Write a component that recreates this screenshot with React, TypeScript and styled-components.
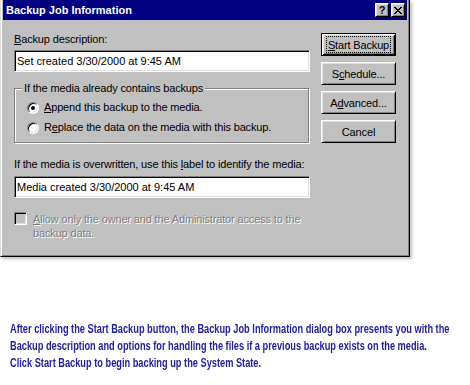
import React from "react";
import styled, { createGlobalStyle, css } from "styled-components";

const Global = createGlobalStyle`
  html, body { margin: 0; padding: 0; background: #fff; }
  body { font-family: "Liberation Sans", Arial, sans-serif; }
`;

const Page = styled.div`
  width: 470px;
  height: 385px;
  background: #fff;
  overflow: hidden;
`;

const Frame = styled.div`
  width: 410px;
  box-sizing: border-box;
  background: #c0c0c0;
  border: 1px solid;
  border-top: none;
  border-color: #dfdfdf #000 #000 #dfdfdf;
  padding: 0 2px 2px 2px;
  box-shadow: inset 1px 0 #fff, inset -1px -1px #808080, 2px 2px 3px rgba(0, 0, 0, 0.25);
`;

const TitleBar = styled.div`
  height: 20px;
  background: #000080;
  display: flex;
  align-items: center;
  padding: 0 2px 0 3px;
  color: #fff;
  font: bold 11px "Liberation Sans", Arial, sans-serif;
`;

const TitleText = styled.div`
  flex: 1;
`;

const TitleButtons = styled.div`
  display: flex;
  gap: 2px;
`;

const TitleBtn = styled.div`
  width: 14px;
  height: 14px;
  box-sizing: border-box;
  background: #c0c0c0;
  border: 1px solid;
  border-color: #fff #000 #000 #fff;
  box-shadow: inset 1px 1px #dfdfdf, inset -1px -1px #808080;
  display: flex;
  align-items: center;
  justify-content: center;
  color: #000;
  font: bold 11px "Liberation Sans", Arial, sans-serif;
  line-height: 1;
`;

const Body = styled.div`
  display: flex;
  gap: 11px;
  padding: 13px 11px 14px 11px;
  font: 11px "Liberation Sans", Arial, sans-serif;
  letter-spacing: -0.15px;
  color: #000;
`;

const LeftCol = styled.div`
  width: 296px;
  display: flex;
  flex-direction: column;
`;

const Label = styled.div<{ $mt?: number }>`
  line-height: 13px;
  white-space: nowrap;
  margin-top: ${(p) => p.$mt ?? 0}px;
`;

const Field = styled.input<{ $mt?: number }>`
  display: block;
  width: 296px;
  height: 22px;
  box-sizing: border-box;
  margin: ${(p) => p.$mt ?? 0}px 0 0 0;
  padding: 0 0 0 2px;
  background: #fff;
  border: 1px solid;
  border-color: #808080 #fff #fff #808080;
  box-shadow: inset 1px 1px #000, inset -1px -1px #dfdfdf;
  font: 11px "Liberation Sans", Arial, sans-serif;
  letter-spacing: 0;
  color: #000;
  outline: none;
`;

const Group = styled.div`
  position: relative;
  margin-top: 16px;
  margin-right: 1px;
  border: 1px solid #808080;
  box-shadow: inset 1px 1px #fff, 1px 1px #fff;
  padding: 12px 0 8px 12px;
  display: flex;
  flex-direction: column;
  gap: 7px;
`;

const Legend = styled.span`
  position: absolute;
  left: 7px;
  top: -7px;
  padding: 0 2px;
  background: #c0c0c0;
  line-height: 13px;
  white-space: nowrap;
`;

const OptionRow = styled.div`
  display: flex;
  align-items: center;
  gap: 5px;
  height: 13px;
  line-height: 13px;
  white-space: nowrap;
`;

const Radio = styled.span`
  width: 12px;
  height: 12px;
  box-sizing: border-box;
  border-radius: 50%;
  background: #fff;
  border: 1px solid;
  border-color: #808080 #fff #fff #808080;
  box-shadow: inset 1px 1px #000, inset -1px -1px #dfdfdf;
  display: flex;
  align-items: center;
  justify-content: center;
  flex-shrink: 0;
`;

const Dot = styled.span`
  width: 4px;
  height: 4px;
  border-radius: 50%;
  background: #000;
`;

const CheckRow = styled.div`
  display: flex;
  align-items: flex-start;
  gap: 6px;
  margin-top: 14px;
`;

const CheckBox = styled.span`
  width: 13px;
  height: 13px;
  box-sizing: border-box;
  background: #c0c0c0;
  border: 1px solid;
  border-color: #808080 #fff #fff #808080;
  box-shadow: inset 1px 1px #000, inset -1px -1px #dfdfdf;
  flex-shrink: 0;
`;

const DisabledText = styled.div`
  color: #808080;
  text-shadow: 1px 1px 0 #fff;
  line-height: 14px;
`;

const RightCol = styled.div`
  display: flex;
  flex-direction: column;
  gap: 6px;
`;

const Button = styled.div<{ $default?: boolean }>`
  width: 75px;
  height: 23px;
  box-sizing: border-box;
  background: #c0c0c0;
  border: 1px solid;
  border-color: #fff #000 #000 #fff;
  box-shadow: inset 1px 1px #dfdfdf, inset -1px -1px #808080;
  display: flex;
  align-items: center;
  justify-content: center;
  white-space: nowrap;
  ${(p) =>
    p.$default &&
    css`
      border-color: #000;
      box-shadow: inset 1px 1px #fff, inset -1px -1px #000, inset 2px 2px #dfdfdf,
        inset -2px -2px #808080;
      padding: 2px 4px;
    `}
`;

const FocusBox = styled.span`
  flex: 1;
  align-self: stretch;
  border: 1px dotted #000;
  display: flex;
  align-items: center;
  justify-content: center;
`;

const Caption = styled.div`
  margin-top: 64px;
  padding-left: 10px;
  color: #22229b;
  font-family: "Liberation Sans", Arial, sans-serif;
  font-weight: bold;
  font-size: 12px;
  line-height: 17px;
  white-space: nowrap;
  transform: scaleX(0.77);
  transform-origin: 10px 0;
`;

const CloseIcon = () => (
  <svg width="8" height="7" viewBox="0 0 8 7" shapeRendering="crispEdges">
    <path
      d="M0 0h2v1h-2zM6 0h2v1h-2zM1 1h2v1h-2zM5 1h2v1h-2zM2 2h4v1h-4zM3 3h2v1h-2zM2 4h4v1h-4zM1 5h2v1h-2zM5 5h2v1h-2zM0 6h2v1h-2zM6 6h2v1h-2z"
      fill="#000"
    />
  </svg>
);

export default function App() {
  return (
    <Page>
      <Global />
      <Frame>
        <TitleBar>
          <TitleText>Backup Job Information</TitleText>
          <TitleButtons>
            <TitleBtn>?</TitleBtn>
            <TitleBtn>
              <CloseIcon />
            </TitleBtn>
          </TitleButtons>
        </TitleBar>
        <Body>
          <LeftCol>
            <Label>
              <u>B</u>ackup description:
            </Label>
            <Field $mt={4} readOnly value="Set created 3/30/2000 at 9:45 AM" />
            <Group>
              <Legend>If the media already contains backups</Legend>
              <OptionRow>
                <Radio>
                  <Dot />
                </Radio>
                <span>
                  <u>A</u>ppend this backup to the media.
                </span>
              </OptionRow>
              <OptionRow>
                <Radio />
                <span>
                  R<u>e</u>place the data on the media with this backup.
                </span>
              </OptionRow>
            </Group>
            <Label $mt={15}>
              If the media is overwritten, use this <u>l</u>abel to identify the media:
            </Label>
            <Field $mt={5} readOnly value="Media created 3/30/2000 at 9:45 AM" />
            <CheckRow>
              <CheckBox />
              <DisabledText>
                <u>A</u>llow only the owner and the Administrator access to the
                <br />
                backup data.
              </DisabledText>
            </CheckRow>
          </LeftCol>
          <RightCol>
            <Button $default>
              <FocusBox>
                <u>S</u>tart Backup
              </FocusBox>
            </Button>
            <Button>
              S<u>c</u>hedule...
            </Button>
            <Button>
              A<u>d</u>vanced...
            </Button>
            <Button>Cancel</Button>
          </RightCol>
        </Body>
      </Frame>
      <Caption>
        After clicking the Start Backup button, the Backup Job Information dialog box presents you with the
        <br />
        Backup description and options for handling the files if a previous backup exists on the media.
        <br />
        Click Start Backup to begin backing up the System State.
      </Caption>
    </Page>
  );
}
